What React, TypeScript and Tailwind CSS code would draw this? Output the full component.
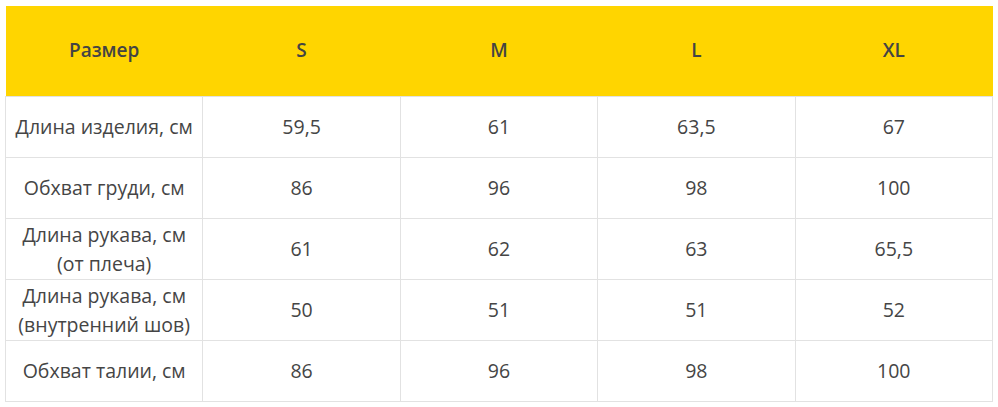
const sizes = ['S', 'M', 'L', 'XL'];

const rows: { label: string[]; values: string[] }[] = [
  { label: ['Длина изделия, см'], values: ['59,5', '61', '63,5', '67'] },
  { label: ['Обхват груди, см'], values: ['86', '96', '98', '100'] },
  { label: ['Длина рукава, см', '(от плеча)'], values: ['61', '62', '63', '65,5'] },
  { label: ['Длина рукава, см', '(внутренний шов)'], values: ['50', '51', '51', '52'] },
  { label: ['Обхват талии, см'], values: ['86', '96', '98', '100'] },
];

export default function App() {
  return (
    <div className="w-[998px] h-[407px] bg-white pt-[6px] pl-[5px] font-['Open_Sans',sans-serif] text-[#454545]">
      <table className="w-[988px] table-fixed border-collapse text-center text-[19.5px] leading-[29px]">
        <thead>
          <tr className="bg-[#ffd500] h-[90px]">
            <th className="font-semibold text-[19px] text-[#444]">Размер</th>
            {sizes.map((s) => (
              <th key={s} className="font-semibold text-[19px] text-[#444]">
                {s}
              </th>
            ))}
          </tr>
        </thead>
        <tbody>
          {rows.map((row, i) => (
            <tr key={i} className="h-[61px]">
              <td className="border border-[#e2e2e2] px-1 font-normal">
                {row.label.map((l) => (
                  <div key={l}>{l}</div>
                ))}
              </td>
              {row.values.map((v, j) => (
                <td key={j} className="border border-[#e2e2e2] px-1">
                  {v}
                </td>
              ))}
            </tr>
          ))}
        </tbody>
      </table>
    </div>
  );
}
